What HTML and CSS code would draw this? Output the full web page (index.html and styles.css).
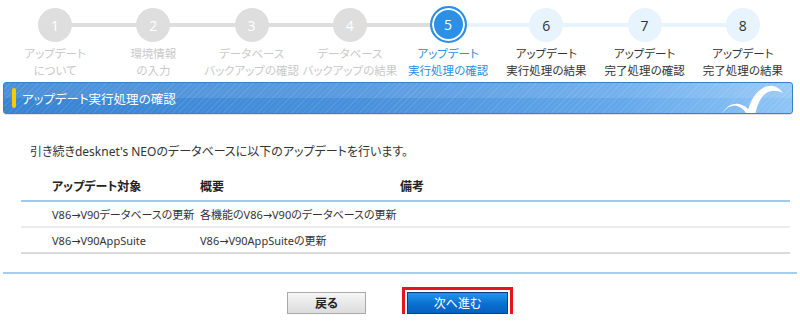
FILE: index.html
```html
<!DOCTYPE html>
<html lang="ja">
<head>
<meta charset="utf-8">
<title>アップデート実行処理の確認</title>
<link rel="stylesheet" href="styles.css">
</head>
<body>
<ol class="steps">
  <li class="step done"><span class="dot">1</span><span class="label">アップデート<br>について</span></li>
  <li class="step done"><span class="dot">2</span><span class="label">環境情報<br>の入力</span></li>
  <li class="step done"><span class="dot">3</span><span class="label">データベース<br>バックアップの確認</span></li>
  <li class="step done"><span class="dot">4</span><span class="label">データベース<br>バックアップの結果</span></li>
  <li class="step current"><span class="dot">5</span><span class="label">アップデート<br>実行処理の確認</span></li>
  <li class="step todo"><span class="dot">6</span><span class="label">アップデート<br>実行処理の結果</span></li>
  <li class="step todo"><span class="dot">7</span><span class="label">アップデート<br>完了処理の確認</span></li>
  <li class="step todo"><span class="dot">8</span><span class="label">アップデート<br>完了処理の結果</span></li>
</ol>

<h1 class="heading">
  <span class="heading-mark"></span>
  <span class="heading-text">アップデート実行処理の確認</span>
  <svg class="heading-deco" viewBox="0 0 80 32" width="80" height="32" aria-hidden="true">
    <path d="M35,32 C37,20 43,9 51,5 C58,1 65,2 71,10 C65,7 58,7 53,11 C48,15 45,23 43,32 Z" fill="#fff"/>
    <path d="M10,32 C13,25 19,22 25,23 C29,24 33,27 35,32 L41,32 C38,27 33,22 27,21 C20,20 13,24 10,32 Z" fill="#fff"/>
  </svg>
</h1>

<p class="intro">引き続きdesknet's NEOのデータベースに以下のアップデートを行います。</p>

<table class="list">
  <thead>
    <tr><th class="c1">アップデート対象</th><th class="c2">概要</th><th class="c3">備考</th></tr>
  </thead>
  <tbody>
    <tr><td class="c1">V86→V90データベースの更新</td><td class="c2">各機能のV86→V90のデータベースの更新</td><td class="c3"></td></tr>
    <tr class="last"><td class="c1">V86→V90AppSuite</td><td class="c2">V86→V90AppSuiteの更新</td><td class="c3"></td></tr>
  </tbody>
</table>

<div class="rule"></div>

<div class="actions">
  <button class="btn btn-back" type="button">戻る</button>
  <button class="btn btn-next" type="button">次へ進む</button>
</div>
</body>
</html>
```

FILE: styles.css
```css
* { box-sizing: border-box; }

body {
  margin: 0;
  background: #fff;
  color: #333;
  font-family: "Noto Sans", "DejaVu Sans", "Noto Sans CJK JP", sans-serif;
  font-size: 12px;
  font-feature-settings: "palt";
}

/* ---------- steps ---------- */
.steps {
  list-style: none;
  margin: 0 8px 0 6px;
  padding: 0;
  display: grid;
  grid-template-columns: repeat(8, 1fr);
  height: 79px;
}

.step {
  position: relative;
  display: flex;
  flex-direction: column;
  align-items: center;
}

.step::before,
.step::after {
  content: "";
  position: absolute;
  top: 23px;
  height: 4px;
}
.step::before { left: 0; right: 50%; }
.step::after { left: 50%; right: 0; }

.done::before, .done::after,
.current::before { background: #dedede; }
.current::after,
.todo::before, .todo::after { background: #e7f3fd; }
.step:first-child::before,
.step:last-child::after { display: none; }

.dot {
  position: relative;
  z-index: 1;
  width: 34px;
  height: 34px;
  margin-top: 8px;
  border-radius: 50%;
  display: flex;
  align-items: center;
  justify-content: center;
  font-family: "Open Sans", "Noto Sans", sans-serif;
  font-size: 14px;
}

.label {
  margin-top: 3px;
  font-size: 11.5px;
  line-height: 17px;
  text-align: center;
  white-space: nowrap;
}

.done .dot { background: #dedede; color: #fff; }
.done .label { color: #c9c9c9; }

.current .dot {
  width: 37px;
  height: 37px;
  margin-top: 6px;
  background: #2b90e6;
  border: 2px solid #2b90e6;
  box-shadow: inset 0 0 0 2px #fff;
  color: #fff;
}
.current .label { margin-top: 2px; color: #2b8ee2; }

.todo .dot { background: #e7f3fd; color: #333; }
.todo .label { color: #333; }

/* ---------- heading ---------- */
.heading {
  position: relative;
  margin: 3px 7px 0 3px;
  height: 32px;
  padding-left: 8px;
  display: flex;
  align-items: center;
  border-radius: 3px;
  border: 1px solid #3a80c8;
  overflow: hidden;
  font-weight: normal;
  font-size: 12.5px;
  color: #fff;
  background:
    linear-gradient(to bottom, rgba(255,255,255,0.10) 0, rgba(255,255,255,0.10) 50%, rgba(255,255,255,0) 50%),
    repeating-linear-gradient(135deg, rgba(255,255,255,0.09) 0, rgba(255,255,255,0.09) 1px, rgba(255,255,255,0) 1px, rgba(255,255,255,0) 4px),
    linear-gradient(to right, #3784d3 0%, #4890db 45%, #64a8ea 78%, #8fc5f6 100%);
  box-shadow: 0 1px 1px rgba(0,0,0,0.12);
}

.heading-mark {
  width: 4px;
  height: 20px;
  border-radius: 2px;
  background: #f7cc00;
  margin-right: 6px;
}

.heading-deco {
  position: absolute;
  right: 0;
  top: 0;
}

/* ---------- intro ---------- */
.intro {
  margin: 29px 0 0;
  padding-left: 30px;
  line-height: 18px;
  color: #333;
}

/* ---------- table ---------- */
.list {
  margin: 10px 10px 0 21px;
  width: calc(100% - 31px);
  border-collapse: collapse;
  color: #333;
}

.list th {
  height: 30px;
  padding: 0;
  text-align: left;
  font-weight: bold;
  font-size: 12px;
  color: #222;
  border-bottom: 2px solid #9dcaef;
  vertical-align: middle;
}

.list td {
  height: 26px;
  padding: 0;
  font-size: 11px;
  white-space: nowrap;
  border-bottom: 2px solid #ececec;
  vertical-align: middle;
}
.list tr.last td { border-bottom-color: #dadada; }

.list .c1 { width: 176px; padding-left: 31px; }
.list .c2 { width: 200px; padding-left: 3px; }
.list .c3 { padding-left: 3px; }

.rule {
  margin: 18px 3px 0 3px;
  height: 2px;
  background: #a6cdef;
}

/* ---------- buttons ---------- */
.actions {
  margin-top: 18px;
  display: flex;
  justify-content: center;
  gap: 41px;
  padding-right: 5px;
}

.btn {
  height: 22px;
  padding: 0;
  font-family: "Noto Sans CJK JP", "Noto Sans", sans-serif;
  font-feature-settings: "palt";
  font-size: 12px;
  line-height: 20px;
  cursor: pointer;
}

.btn-back {
  width: 79px;
  border: 1px solid #a9a9a9;
  background: linear-gradient(to bottom, #f6f6f6, #dcdcdc);
  color: #222;
  font-weight: bold;
}

.btn-next {
  width: 101px;
  border: 1px solid #0b3f78;
  background: linear-gradient(to bottom, #1f97ee, #0a6fd0 55%, #0560c0);
  color: #fff;
  outline: 3px solid #e8141c;
  outline-offset: 2px;
}
```
